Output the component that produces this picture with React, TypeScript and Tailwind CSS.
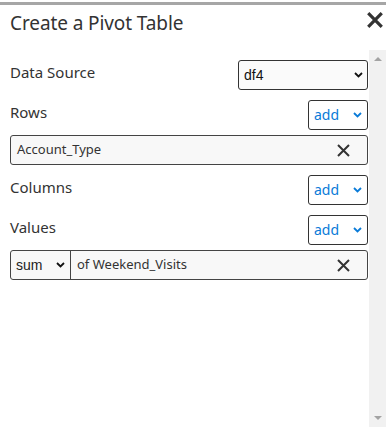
const font = { fontFamily: '"Noto Sans", "Open Sans", sans-serif' };
const arial = { fontFamily: '"Liberation Sans", Arial, sans-serif' };

const Chevron = ({ color = "#111" }: { color?: string }) => (
  <svg width="9" height="6" viewBox="0 0 9 6" fill="none">
    <path d="M1 1l3.5 3.5L8 1" stroke={color} strokeWidth="1.8" />
  </svg>
);

const Cross = ({ size = 13, stroke = 2 }: { size?: number; stroke?: number }) => (
  <svg width={size} height={size} viewBox="0 0 13 13" fill="none">
    <path d="M1 1l11 11M12 1L1 12" stroke="#333" strokeWidth={stroke} />
  </svg>
);

const AddSelect = () => (
  <div className="w-[60px] h-[30px] flex items-center justify-between pl-[5px] pr-[5px] border border-[#333] rounded-[3px] bg-white">
    <span className="text-[14px] text-[#0a7bd8] leading-none" style={font}>add</span>
    <Chevron color="#0a7bd8" />
  </div>
);

const Label = ({ children }: { children: React.ReactNode }) => (
  <span className="text-[15px] leading-[24px] text-[#333]" style={font}>{children}</span>
);

export default function App() {
  return (
    <div className="w-[386px] h-[427px] bg-white flex flex-col overflow-hidden">
      <div className="mt-[2px] h-[3px] bg-[#a6a6a6]" />
      <div className="h-[45px] flex items-start justify-between pl-[10px] pr-[3px]">
        <h1 className="mt-[4px] text-[19px] leading-[28px] text-[#333] tracking-[-0.1px]" style={font}>Create a Pivot Table</h1>
        <div className="mt-[7px]">
          <Cross size={16} stroke={2.6} />
        </div>
      </div>
      <div className="flex-1 flex">
        <div className="flex-1 pl-[10px] pr-[1px] flex flex-col">
          <div className="mt-[10px] flex items-start justify-between">
            <Label>Data Source</Label>
            <div className="w-[130px] h-[30px] flex items-center justify-between pl-[5px] pr-[4px] border border-[#333] rounded-[3px] bg-[#fafafa]">
              <span className="text-[14px] text-[#111]" style={arial}>df4</span>
              <Chevron />
            </div>
          </div>
          <div className="mt-[10px] flex items-start justify-between">
            <Label>Rows</Label>
            <AddSelect />
          </div>
          <div className="mt-[5px] h-[30px] flex items-center justify-between pl-[6px] pr-[17px] border border-[#444] rounded-[3px] bg-[#f8f8f8]">
            <span className="text-[13px] text-[#333]" style={font}>Account_Type</span>
            <Cross />
          </div>
          <div className="mt-[10px] flex items-start justify-between">
            <Label>Columns</Label>
            <AddSelect />
          </div>
          <div className="mt-[10px] flex items-start justify-between">
            <Label>Values</Label>
            <AddSelect />
          </div>
          <div className="mt-[5px] h-[30px] flex items-stretch border border-[#444] rounded-[3px] bg-[#f8f8f8]">
            <div className="w-[60px] flex items-center justify-between pl-[5px] pr-[5px] border-r border-[#444]">
              <span className="text-[14px] text-[#222]" style={arial}>sum</span>
              <Chevron />
            </div>
            <div className="flex-1 flex items-center justify-between pl-[6px] pr-[17px]">
              <span className="text-[13px] text-[#333]" style={font}>of Weekend_Visits</span>
              <Cross />
            </div>
          </div>
        </div>
        <div className="w-[17px] bg-[#f1f1f1] flex flex-col items-center justify-between py-[7px]">
          <svg width="8" height="4" viewBox="0 0 8 4"><path d="M0 4L4 0L8 4Z" fill="#a3a3a3" /></svg>
          <svg width="8" height="4" viewBox="0 0 8 4"><path d="M0 0L8 0L4 4Z" fill="#a3a3a3" /></svg>
        </div>
      </div>
    </div>
  );
}
